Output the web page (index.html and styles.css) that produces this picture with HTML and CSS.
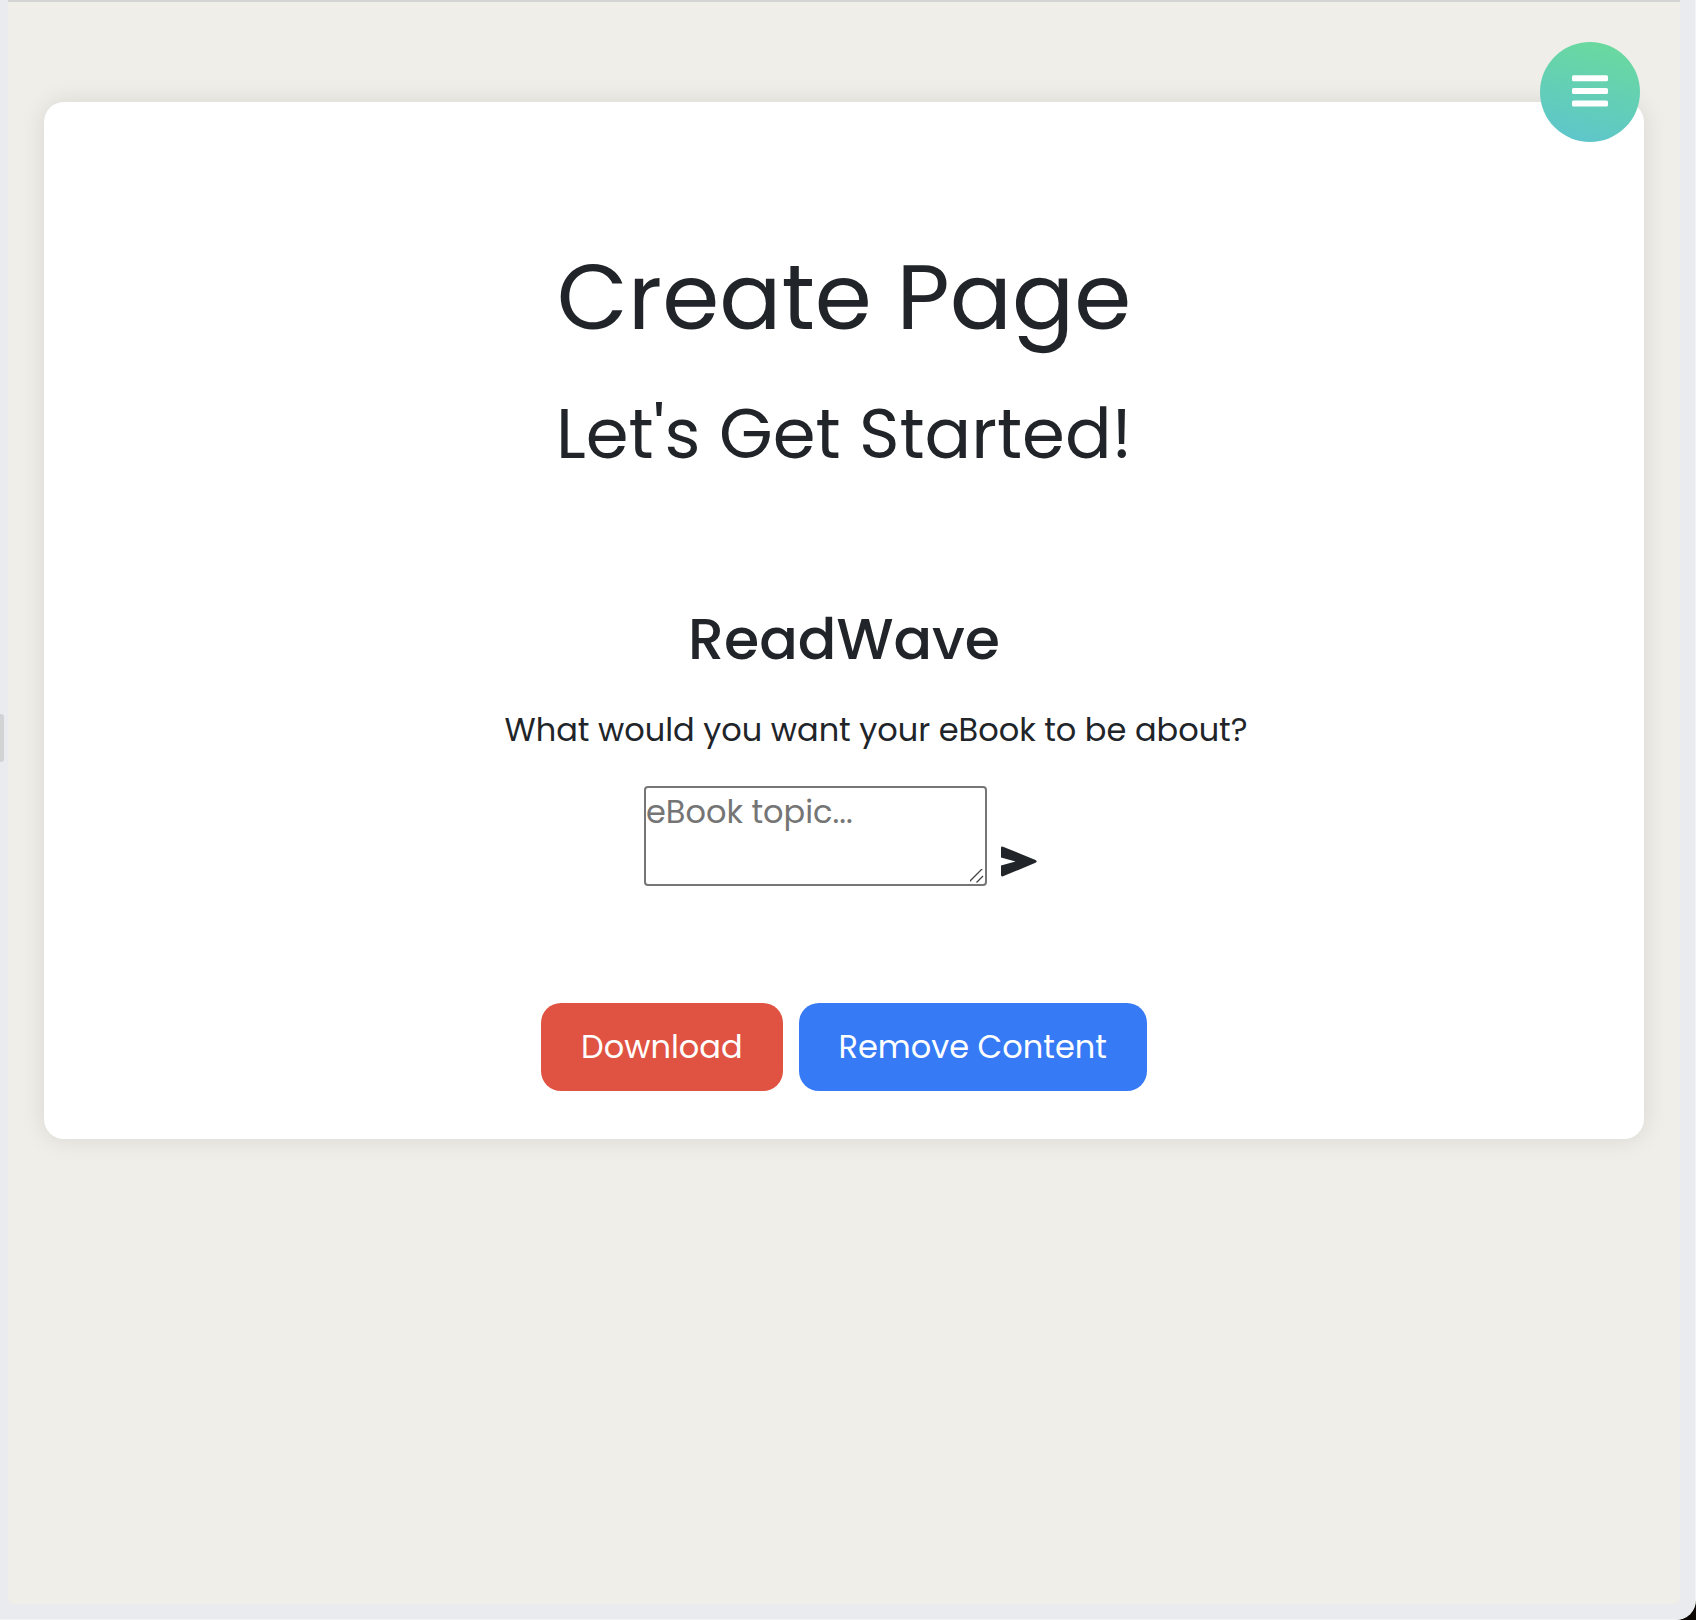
FILE: index.html
```html
<!DOCTYPE html>
<html lang="en">
<head>
<meta charset="utf-8">
<meta name="viewport" content="width=device-width, initial-scale=1">
<title>ReadWave - Create</title>
<link rel="stylesheet" href="styles.css">
</head>
<body>
<div class="window">
  <span class="handle"></span>
  <div class="view">
    <button class="menu" type="button" aria-label="Menu">
      <svg width="36" height="34" viewBox="0 0 36 34"><g fill="#fff"><rect y=".2" width="36" height="6" rx="1.5"/><rect y="13" width="36" height="6" rx="1.5"/><rect y="25.500" width="36" height="6" rx="1.5"/></g></svg>
    </button>
    <main class="card">
      <h1 class="title">Create Page</h1>
      <h2 class="subtitle">Let's Get Started!</h2>
      <form class="form">
        <h3 class="brand">ReadWave</h3>
        <label class="question" for="topic">What would you want your eBook to be about?</label>
        <div class="entry">
          <textarea class="topic" id="topic" placeholder="eBook topic..."></textarea>
          <button class="send" type="button" aria-label="Send">
            <svg width="38" height="32" viewBox="0 0 38 32"><path d="M1 2Q1 0 3 .7L35.5 14Q38 15.3 35.5 16.8L3 30.3Q1 31 1 29V19.5L15.500 15.500 1 11.500Z" fill="#212529"/></svg>
          </button>
        </div>
      </form>
      <div class="actions">
        <button class="btn download" type="button">Download</button>
        <button class="btn remove" type="button">Remove Content</button>
      </div>
    </main>
  </div>
</div>
</body>
</html>
```
FILE: styles.css
```css
* { box-sizing: border-box; }
body {
  margin: 0;
  background: #0d0704;
  color: #212529;
  font-family: Poppins, Inter, sans-serif;
}
button, textarea { font: inherit; }
.window {
  position: relative;
  display: flex;
  min-height: 100vh;
  padding: 0 15px 15px 8px;
  background: #e9ebee;
  border-right: 1px solid #f3f4f5;
  border-bottom: 1px solid #f3f4f5;
  border-bottom-right-radius: 20px;
}
.handle {
  position: absolute;
  left: 0;
  top: 714px;
  width: 4px;
  height: 48px;
  background: #d2d3d5;
  border-radius: 0 3px 3px 0;
}
.view {
  position: relative;
  flex: 1;
  padding: 100px 36px;
  background: #efeee8;
  border-top: 2px solid #d3d4d4;
  border-radius: 0 0 6px 6px;
}
.menu {
  position: absolute;
  top: 40px;
  right: 40px;
  display: grid;
  place-items: center;
  width: 100px;
  height: 100px;
  padding: 0;
  border: 0;
  border-radius: 50%;
  background: linear-gradient(15deg, #5dc4cf, #6bdb9a);
}
.card {
  display: flex;
  flex-direction: column;
  align-items: center;
  padding: 137px 40px 48px;
  background: #fff;
  border-radius: 20px;
  box-shadow: 0 0 24px rgba(0, 0, 0, 0.1);
}
.title, .subtitle, .brand { margin: 0; font-weight: 400; text-align: center; }
.title { font-size: 92px; line-height: 116px; }
.subtitle { margin-top: 37px; font-size: 69px; line-height: 84px; }
.form {
  display: flex;
  flex-direction: column;
  align-items: center;
  margin-top: 127px;
}
.brand { font-size: 57px; line-height: 72px; font-weight: 500; }
.question {
  margin-top: 31px;
  padding-left: 64px;
  font-size: 32px;
  line-height: 48px;
}
.entry {
  display: flex;
  align-items: flex-end;
  gap: 13px;
  margin-top: 32px;
}
.topic {
  width: 343px;
  height: 100px;
  padding: 0;
  border: 2px solid #767676;
  border-radius: 4px;
  background: #fff;
  font-size: 32px;
  line-height: 48px;
}
.topic::placeholder { color: #757575; }
.topic::-webkit-scrollbar { width: 18px; height: 18px; }
.topic::-webkit-resizer {
  background: url("data:image/svg+xml,%3Csvg xmlns='http://www.w3.org/2000/svg' width='18' height='18'%3E%3Cpath d='M1.500 16.500l14.500-14.500M9.500 16.500l6.500-6.500' stroke='%23444' stroke-width='1.300'/%3E%3C/svg%3E") no-repeat right bottom;
}
.send {
  display: flex;
  width: 44px;
  padding: 0 0 8px;
  border: 0;
  background: none;
}
.actions {
  display: flex;
  gap: 16px;
  margin-top: 117px;
}
.btn {
  padding: 20px 40px;
  border: 0;
  border-radius: 20px;
  color: #fff;
  font-size: 32px;
  line-height: 48px;
}
.download { background: #e05342; }
.remove { background: #367af6; }
```
